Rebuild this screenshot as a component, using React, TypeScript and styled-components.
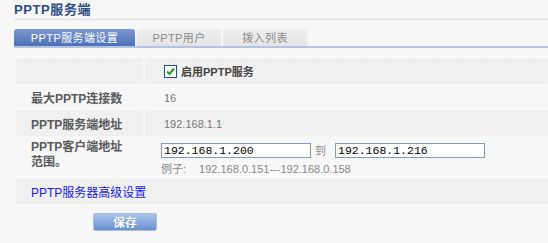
import React from 'react';
import styled, { createGlobalStyle } from 'styled-components';

const GlobalStyle = createGlobalStyle`
  html, body {
    margin: 0;
    padding: 0;
    background: #f7f7f7;
    font-family: "Liberation Sans", "Noto Sans CJK SC", sans-serif;
    font-size: 12px;
  }
`;

const Page = styled.div`
  width: 548px;
  height: 243px;
  padding-left: 14px;
  box-sizing: border-box;
  overflow: hidden;
`;

const Title = styled.h1`
  margin: 0;
  height: 19px;
  line-height: 19px;
  font-size: 13px;
  letter-spacing: 0.6px;
  font-weight: bold;
  color: #2c4b80;
  border-bottom: 1px solid #dcdcdc;
`;

const TabBar = styled.div`
  display: flex;
  gap: 2px;
  margin-top: 9px;
  border-bottom: 2px solid #b3c3e2;
`;

const Tab = styled.div<{ $active?: boolean }>`
  height: 17px;
  line-height: 18px;
  width: ${(p) => (p.$active ? '121px' : '84px')};
  text-align: center;
  font-size: 11px;
  letter-spacing: 0.4px;
  border-radius: 3px 3px 0 0;
  color: ${(p) => (p.$active ? '#ffffff' : '#8a8a8a')};
  background: ${(p) =>
    p.$active
      ? 'linear-gradient(#7b98d0, #4d70b6)'
      : 'linear-gradient(#efefef, #e4e4e4)'};
`;

const Table = styled.div`
  margin-top: 10px;
  margin-left: 2px;
  display: grid;
  grid-template-columns: 127px 1fr;
  column-gap: 2px;
`;

const dots = `
  background-color: #efefef;
  background-image: radial-gradient(#f7f7f7 0.6px, transparent 0.7px);
  background-size: 3px 3px;
`;

const Cell = styled.div<{ $shaded?: boolean; $h: number }>`
  height: ${(p) => p.$h}px;
  display: flex;
  align-items: center;
  ${(p) => (p.$shaded ? dots : '')}
`;

const Label = styled(Cell)`
  padding-left: 15px;
  font-weight: bold;
  color: #5a5a5a;
`;

const Value = styled(Cell)`
  padding-left: 19px;
  color: #777;
  font-size: 11px;
`;

const MultiLabel = styled(Label)`
  align-items: flex-start;
  padding-top: 4px;
  box-sizing: border-box;
  line-height: 15px;
`;

const RangeCell = styled(Cell)`
  flex-direction: column;
  align-items: flex-start;
  justify-content: flex-start;
  padding-left: 16px;
  padding-top: 6px;
  box-sizing: border-box;
`;

const RangeLine = styled.div`
  display: flex;
  align-items: center;
`;

const IpInput = styled.input`
  width: 150px;
  height: 15px;
  box-sizing: border-box;
  border: 1px solid #7f9db9;
  background: #fff;
  padding: 0 2px;
  font-family: "Liberation Mono", monospace;
  font-size: 11.5px;
  color: #000;
  outline: none;
`;

const To = styled.span`
  margin: 0 9px 0 4px;
  color: #888;
  font-size: 11px;
`;

const Example = styled.div`
  margin-top: 2px;
  color: #888;
  font-size: 11px;
  span {
    margin-left: 13px;
  }
`;

const CheckLabel = styled.label`
  display: flex;
  align-items: center;
  gap: 4px;
  font-weight: bold;
  color: #444;
`;

const Box = styled.span`
  width: 11px;
  height: 11px;
  border: 1px solid #1c5180;
  background: #fff;
  display: flex;
  align-items: center;
  justify-content: center;
`;

const FullRow = styled(Cell)`
  grid-column: 1 / span 2;
  padding-left: 15px;
`;

const Link = styled.a`
  color: #1a1aee;
  text-decoration: none;
`;

const SaveRow = styled.div`
  padding: 9px 0 0 79px;
`;

const SaveButton = styled.button`
  width: 64px;
  height: 18px;
  border: 1px solid #a9bedf;
  border-radius: 2px;
  background: linear-gradient(#a8c3ea, #6a91d0);
  color: #fff;
  font-weight: bold;
  font-size: 12px;
  font-family: "Noto Sans CJK SC", sans-serif;
  line-height: 14px;
  padding: 0;
  text-shadow: 0 0 1px #5577aa;
`;

export default function App() {
  return (
    <Page>
      <GlobalStyle />
      <Title>PPTP服务端</Title>
      <TabBar>
        <Tab $active>PPTP服务端设置</Tab>
        <Tab>PPTP用户</Tab>
        <Tab>拨入列表</Tab>
      </TabBar>
      <Table>
        <Label $shaded $h={26} />
        <Value $shaded $h={26}>
          <CheckLabel>
            <Box>
              <svg width="9" height="9" viewBox="0 0 9 9">
                <path d="M1 4.5 L3.5 7 L8 1.5" stroke="#21a121" strokeWidth="2" fill="none" />
              </svg>
            </Box>
            启用PPTP服务
          </CheckLabel>
        </Value>
        <Label $h={27}>最大PPTP连接数</Label>
        <Value $h={27}>16</Value>
        <Label $shaded $h={25}>PPTP服务端地址</Label>
        <Value $shaded $h={25}>192.168.1.1</Value>
        <MultiLabel $h={43}>
          PPTP客户端地址
          <br />
          范围。
        </MultiLabel>
        <RangeCell $h={43}>
          <RangeLine>
            <IpInput defaultValue="192.168.1.200" />
            <To>到</To>
            <IpInput defaultValue="192.168.1.216" />
          </RangeLine>
          <Example>
            例子:<span>192.168.0.151---192.168.0.158</span>
          </Example>
        </RangeCell>
        <FullRow $shaded $h={25}>
          <Link href="#">PPTP服务器高级设置</Link>
        </FullRow>
      </Table>
      <SaveRow>
        <SaveButton>保存</SaveButton>
      </SaveRow>
    </Page>
  );
}
